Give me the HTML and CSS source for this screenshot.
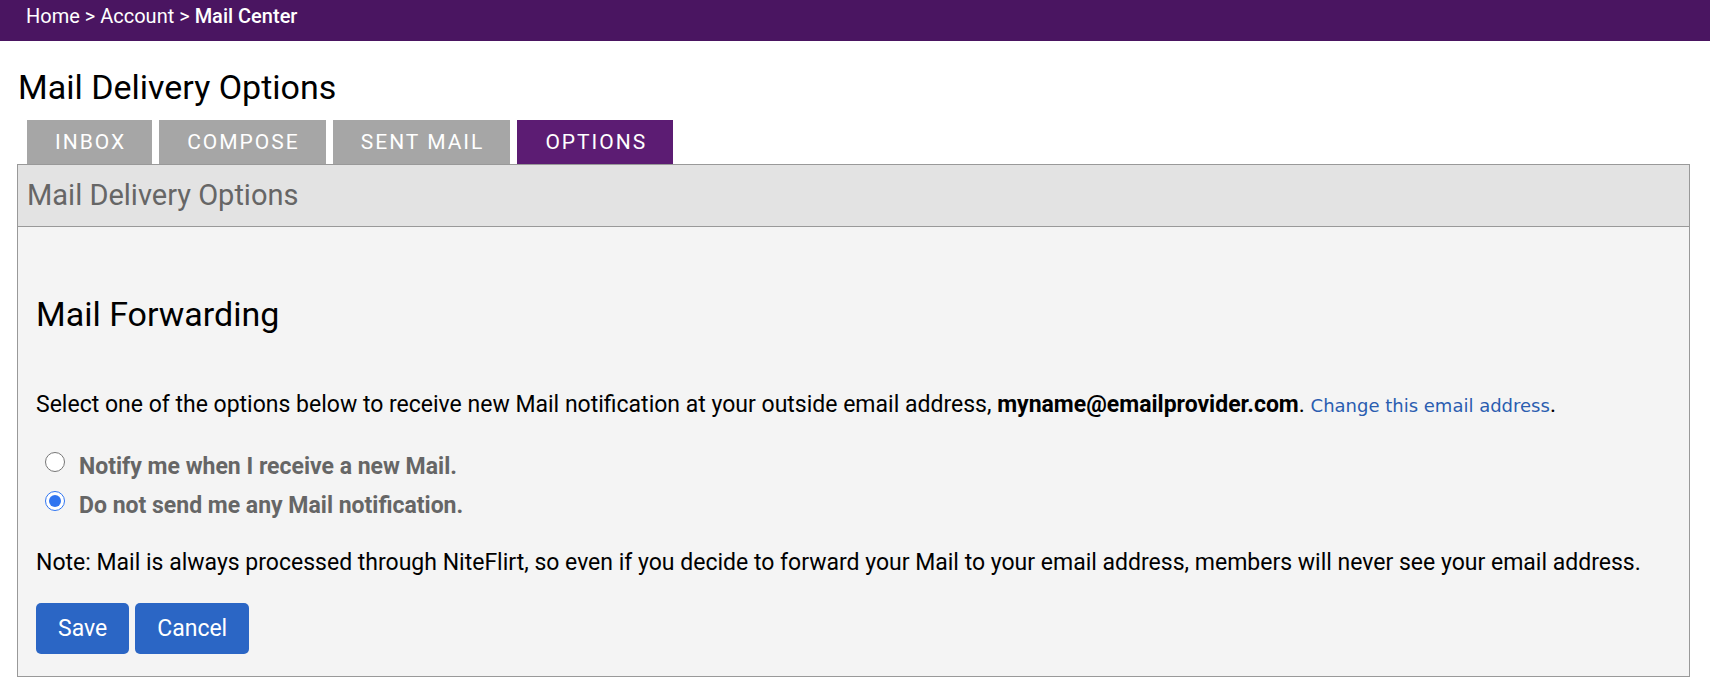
FILE: index.html
```html
<!DOCTYPE html>
<html lang="en">
<head>
  <meta charset="UTF-8">
  <title>Mail Center - Options</title>
  <link rel="stylesheet" href="styles.css">
</head>
<body>

  <div class="breadcrumb">
    <a href="#">Home</a> &gt; <a href="#">Account</a> &gt; <strong>Mail Center</strong>
  </div>

  <div class="conteudo">
    <h1>Mail Delivery Options</h1>

    <div class="abas">
      <a class="aba" href="#">INBOX</a>
      <a class="aba" href="#">COMPOSE</a>
      <a class="aba" href="#">SENT MAIL</a>
      <a class="aba ativa" href="#">OPTIONS</a>
    </div>

    <div class="painel">
      <div class="painel-topo">Mail Delivery Options</div>

      <div class="painel-corpo">
        <h2>Mail Forwarding</h2>

        <p class="texto">
          Select one of the options below to receive new Mail notification at your outside email address,
          <strong>myname@emailprovider.com</strong>. <a class="link" href="#">Change this email address</a>.
        </p>

        <form id="form-opcoes">
          <label class="opcao">
            <input type="radio" name="notificacao" value="notify">
            Notify me when I receive a new Mail.
          </label>
          <label class="opcao">
            <input type="radio" name="notificacao" value="none" checked>
            Do not send me any Mail notification.
          </label>

          <p class="nota">Note: Mail is always processed through NiteFlirt, so even if you decide to forward your Mail to your email address, members will never see your email address.</p>

          <div class="botoes">
            <button type="submit">Save</button>
            <button type="button">Cancel</button>
          </div>
        </form>
      </div>
    </div>
  </div>

</body>
</html>
```

FILE: styles.css
```css
body {
  font-family: Roboto, "Liberation Sans", Arial, sans-serif;
  margin: 0;
  padding: 0;
  background-color: #fff;
  color: #000;
}

.breadcrumb {
  background-color: #4a1561;
  color: #fff;
  height: 41px;
  line-height: 32px;
  padding-left: 26px;
  font-size: 20px;
}

.breadcrumb a {
  color: #fff;
  text-decoration: none;
}

.breadcrumb strong {
  font-weight: 500;
}

.conteudo {
  padding: 0 20px 0 17px;
}

h1 {
  font-size: 34px;
  font-weight: 400;
  margin: 26px 0 0 1px;
  line-height: 40px;
}

.abas {
  display: flex;
  gap: 7px;
  margin-top: 13px;
  padding-left: 10px;
}

.aba {
  display: block;
  height: 44px;
  line-height: 44px;
  padding: 0 26px 0 28px;
  background-color: #a6a6a6;
  color: #fff;
  text-decoration: none;
  font-size: 21px;
  letter-spacing: 2px;
}

.aba.ativa {
  background-color: #5c1c73;
}

.painel {
  border: 1px solid #999;
  background-color: #f4f4f4;
}

.painel-topo {
  background-color: #e3e3e3;
  border-bottom: 1px solid #999;
  height: 61px;
  line-height: 60px;
  padding-left: 9px;
  font-size: 29px;
  color: #666;
}

.painel-corpo {
  padding: 0 18px 22px 18px;
}

h2 {
  font-size: 34px;
  font-weight: 400;
  line-height: 40px;
  margin: 67px 0 0 0;
}

.texto {
  font-size: 23px;
  line-height: 28px;
  margin: 57px 0 0 0;
}

.texto strong {
  font-weight: 700;
}

.link {
  font-family: "DejaVu Sans", Verdana, sans-serif;
  font-size: 18px;
  color: #2a5db0;
  text-decoration: none;
}

.opcao {
  display: flex;
  align-items: center;
  gap: 14px;
  font-size: 23px;
  font-weight: 700;
  color: #666;
  height: 28px;
  margin-top: 11px;
}

.opcao:first-child {
  margin-top: 32px;
}

.opcao input {
  width: 20px;
  height: 20px;
  margin: -8px 0 0 9px;
  accent-color: #2f74f0;
}

.nota {
  font-size: 23px;
  line-height: 28px;
  margin: 30px 0 0 0;
}

.botoes {
  display: flex;
  gap: 6px;
  margin-top: 26px;
}

button {
  height: 51px;
  padding: 0 22px;
  background-color: #2b66c5;
  color: #fff;
  font-family: Roboto, "Liberation Sans", Arial, sans-serif;
  font-size: 23px;
  border: none;
  border-radius: 5px;
  cursor: pointer;
}

button:hover {
  background-color: #2457a8;
}
```
